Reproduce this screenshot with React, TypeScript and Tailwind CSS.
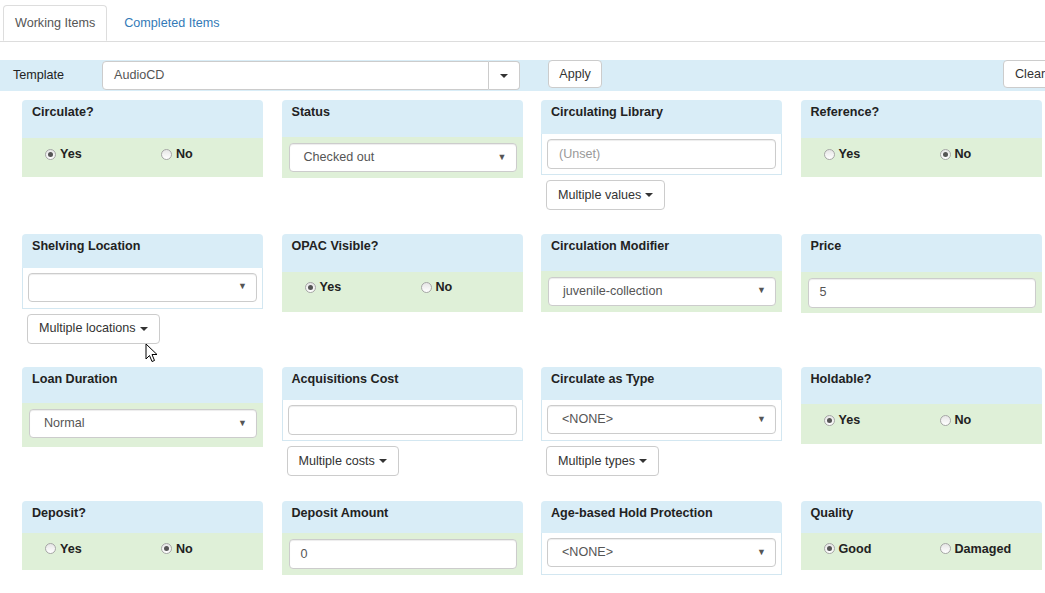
import React from 'react'

type Base = { title: string; hh: number; bh?: number }
type Card = Base &
  (
    | { kind: 'radio'; a: string; b: string; checked: 0 | 1 }
    | { kind: 'greenSelect'; value: string }
    | { kind: 'greenInput'; value: string }
    | { kind: 'whiteSelect'; value: string; button?: string }
    | { kind: 'whiteInput'; value: string; placeholder?: boolean; button?: string }
  )

const cards: Card[] = [
  { kind: 'radio', title: 'Circulate?', hh: 38, bh: 39, a: 'Yes', b: 'No', checked: 0 },
  { kind: 'greenSelect', title: 'Status', hh: 37, value: 'Checked out' },
  { kind: 'whiteInput', title: 'Circulating Library', hh: 34, value: '(Unset)', placeholder: true, button: 'Multiple values' },
  { kind: 'radio', title: 'Reference?', hh: 38, bh: 39, a: 'Yes', b: 'No', checked: 1 },

  { kind: 'whiteSelect', title: 'Shelving Location', hh: 34, value: '', button: 'Multiple locations' },
  { kind: 'radio', title: 'OPAC Visible?', hh: 38, bh: 40, a: 'Yes', b: 'No', checked: 0 },
  { kind: 'greenSelect', title: 'Circulation Modifier', hh: 37, value: 'juvenile-collection' },
  { kind: 'greenInput', title: 'Price', hh: 38, value: '5' },

  { kind: 'greenSelect', title: 'Loan Duration', hh: 36, bh: 44, value: 'Normal' },
  { kind: 'whiteInput', title: 'Acquisitions Cost', hh: 33, value: '', button: 'Multiple costs' },
  { kind: 'whiteSelect', title: 'Circulate as Type', hh: 33, value: '<NONE>', button: 'Multiple types' },
  { kind: 'radio', title: 'Holdable?', hh: 37, bh: 40, a: 'Yes', b: 'No', checked: 0 },

  { kind: 'radio', title: 'Deposit?', hh: 32, bh: 37, a: 'Yes', b: 'No', checked: 1 },
  { kind: 'greenInput', title: 'Deposit Amount', hh: 32, bh: 42, value: '0' },
  { kind: 'whiteSelect', title: 'Age-based Hold Protection', hh: 32, bh: 42, value: '<NONE>' },
  { kind: 'radio', title: 'Quality', hh: 32, bh: 37, a: 'Good', b: 'Damaged', checked: 0 },
]

function Radio({ on }: { on: boolean }) {
  return (
    <span className="w-[11px] h-[11px] rounded-full border border-[#a6a6a6] bg-gradient-to-b from-[#e6e6e6] to-white flex items-center justify-center shrink-0">
      {on && <span className="w-[5px] h-[5px] rounded-full bg-[#555]" />}
    </span>
  )
}

function Caret() {
  return <span className="inline-block w-0 h-0 border-l-[4px] border-r-[4px] border-t-[4px] border-l-transparent border-r-transparent border-t-[#333] ml-[4px] align-middle" />
}

function SelectBox({ value }: { value: string }) {
  return (
    <div className="h-[29px] bg-white border border-[#ccc] rounded-[4px] flex items-center pl-[14px] pr-[9px] text-[#555] shadow-[inset_0_1px_1px_rgba(0,0,0,0.075)]">
      <span className="flex-1">{value}</span>
      <span className="text-[9px] text-[#555]">▼</span>
    </div>
  )
}

function InputBox({ value, placeholder }: { value: string; placeholder?: boolean }) {
  return (
    <div className={`h-[30px] bg-white border border-[#ccc] rounded-[4px] flex items-center pl-[11px] shadow-[inset_0_1px_1px_rgba(0,0,0,0.075)] ${placeholder ? 'text-[#999]' : 'text-[#555]'}`}>
      {value}
    </div>
  )
}

function Btn({ label }: { label: string }) {
  return (
    <div className="mt-[5px] ml-[5px] h-[30px] inline-flex items-center px-[11px] bg-white border border-[#ccc] rounded-[4px] text-[#333]">
      {label}
      <Caret />
    </div>
  )
}

function Header({ title, hh }: { title: string; hh: number }) {
  return (
    <div style={{ height: hh }} className="rounded-t-[4px] bg-[#d9edf7] px-[10px] pt-[2px] leading-5 font-bold text-[#222]">
      {title}
    </div>
  )
}

function CardView({ c }: { c: Card }) {
  if (c.kind === 'radio') {
    const bh = c.bh ?? 39
    return (
      <div>
        <Header title={c.title} hh={c.hh} />
        <div style={{ height: bh }} className="bg-[#dff0d8] grid grid-cols-[116px_1fr] content-start pl-[23px] pt-[6px] font-bold text-[#222]">
          <div className="flex items-center gap-[4px] h-5"><Radio on={c.checked === 0} />{c.a}</div>
          <div className="flex items-center gap-[4px] h-5"><Radio on={c.checked === 1} />{c.b}</div>
        </div>
      </div>
    )
  }
  if (c.kind === 'greenSelect' || c.kind === 'greenInput') {
    const bh = c.bh ?? 41
    return (
      <div>
        <Header title={c.title} hh={c.hh} />
        <div style={{ height: bh }} className="bg-[#dff0d8] pt-[6px] pl-[7px] pr-[6px]">
          {c.kind === 'greenSelect' ? <SelectBox value={c.value} /> : <InputBox value={c.value} />}
        </div>
      </div>
    )
  }
  const bh = c.bh ?? 41
  return (
    <div>
      <Header title={c.title} hh={c.hh} />
      <div style={{ height: bh }} className="bg-white border border-t-0 border-[#d3e7f1] pt-[5px] px-[5px]">
        {c.kind === 'whiteSelect' ? <SelectBox value={c.value} /> : <InputBox value={c.value} placeholder={c.placeholder} />}
      </div>
      {c.button && <Btn label={c.button} />}
    </div>
  )
}

export default function App() {
  return (
    <div className="relative w-[1045px] h-[593px] overflow-hidden bg-white text-[12.6px] text-[#333] font-['Liberation_Sans',Arial,sans-serif]">
      <div className="mt-[5px] flex border-b border-[#ddd] pl-[3px]">
        <div className="h-[36px] -mb-px px-[11px] flex items-center border border-[#ddd] border-b-white rounded-t-[4px] bg-white text-[#555]">Working Items</div>
        <div className="h-[36px] ml-[6px] px-[11px] flex items-center text-[#337ab7]">Completed Items</div>
      </div>

      <div className="mt-[18px] h-[31px] bg-[#d9edf7] flex items-start">
        <div className="w-[102px] h-[31px] pl-[13px] flex items-center text-[#222] shrink-0">Template</div>
        <div className="mt-px w-[387px] h-[29px] bg-white border border-[#ccc] rounded-l-[4px] flex items-center pl-[11px] text-[#555] shrink-0">AudioCD</div>
        <div className="mt-px w-[31px] h-[29px] bg-white border border-l-0 border-[#ccc] rounded-r-[4px] flex items-center justify-center shrink-0">
          <span className="w-0 h-0 border-l-[4px] border-r-[4px] border-t-[4px] border-l-transparent border-r-transparent border-t-[#333]" />
        </div>
        <div className="ml-[28px] w-[54px] h-[28px] bg-white border border-[#ccc] rounded-[4px] flex items-center justify-center text-[#333] shrink-0">Apply</div>
        <div className="ml-[401px] w-[60px] h-[28px] bg-white border border-[#ccc] rounded-[4px] flex items-center pl-[11px] text-[#333] shrink-0">Clear</div>
      </div>

      <div className="ml-[22px] mt-[9px] grid grid-cols-[241px_241px_241px_241px] gap-x-[18.5px] auto-rows-[133.67px]">
        {cards.map((c, i) => <CardView key={i} c={c} />)}
      </div>

      <svg className="absolute left-[145px] top-[343px]" width="13" height="20" viewBox="0 0 13 20">
        <path d="M1 1 L1 16 L4.5 12.5 L7 18.5 L9.5 17.5 L7 11.5 L12 11.5 Z" fill="white" stroke="#000" strokeWidth="1" strokeLinejoin="round" />
      </svg>
    </div>
  )
}
